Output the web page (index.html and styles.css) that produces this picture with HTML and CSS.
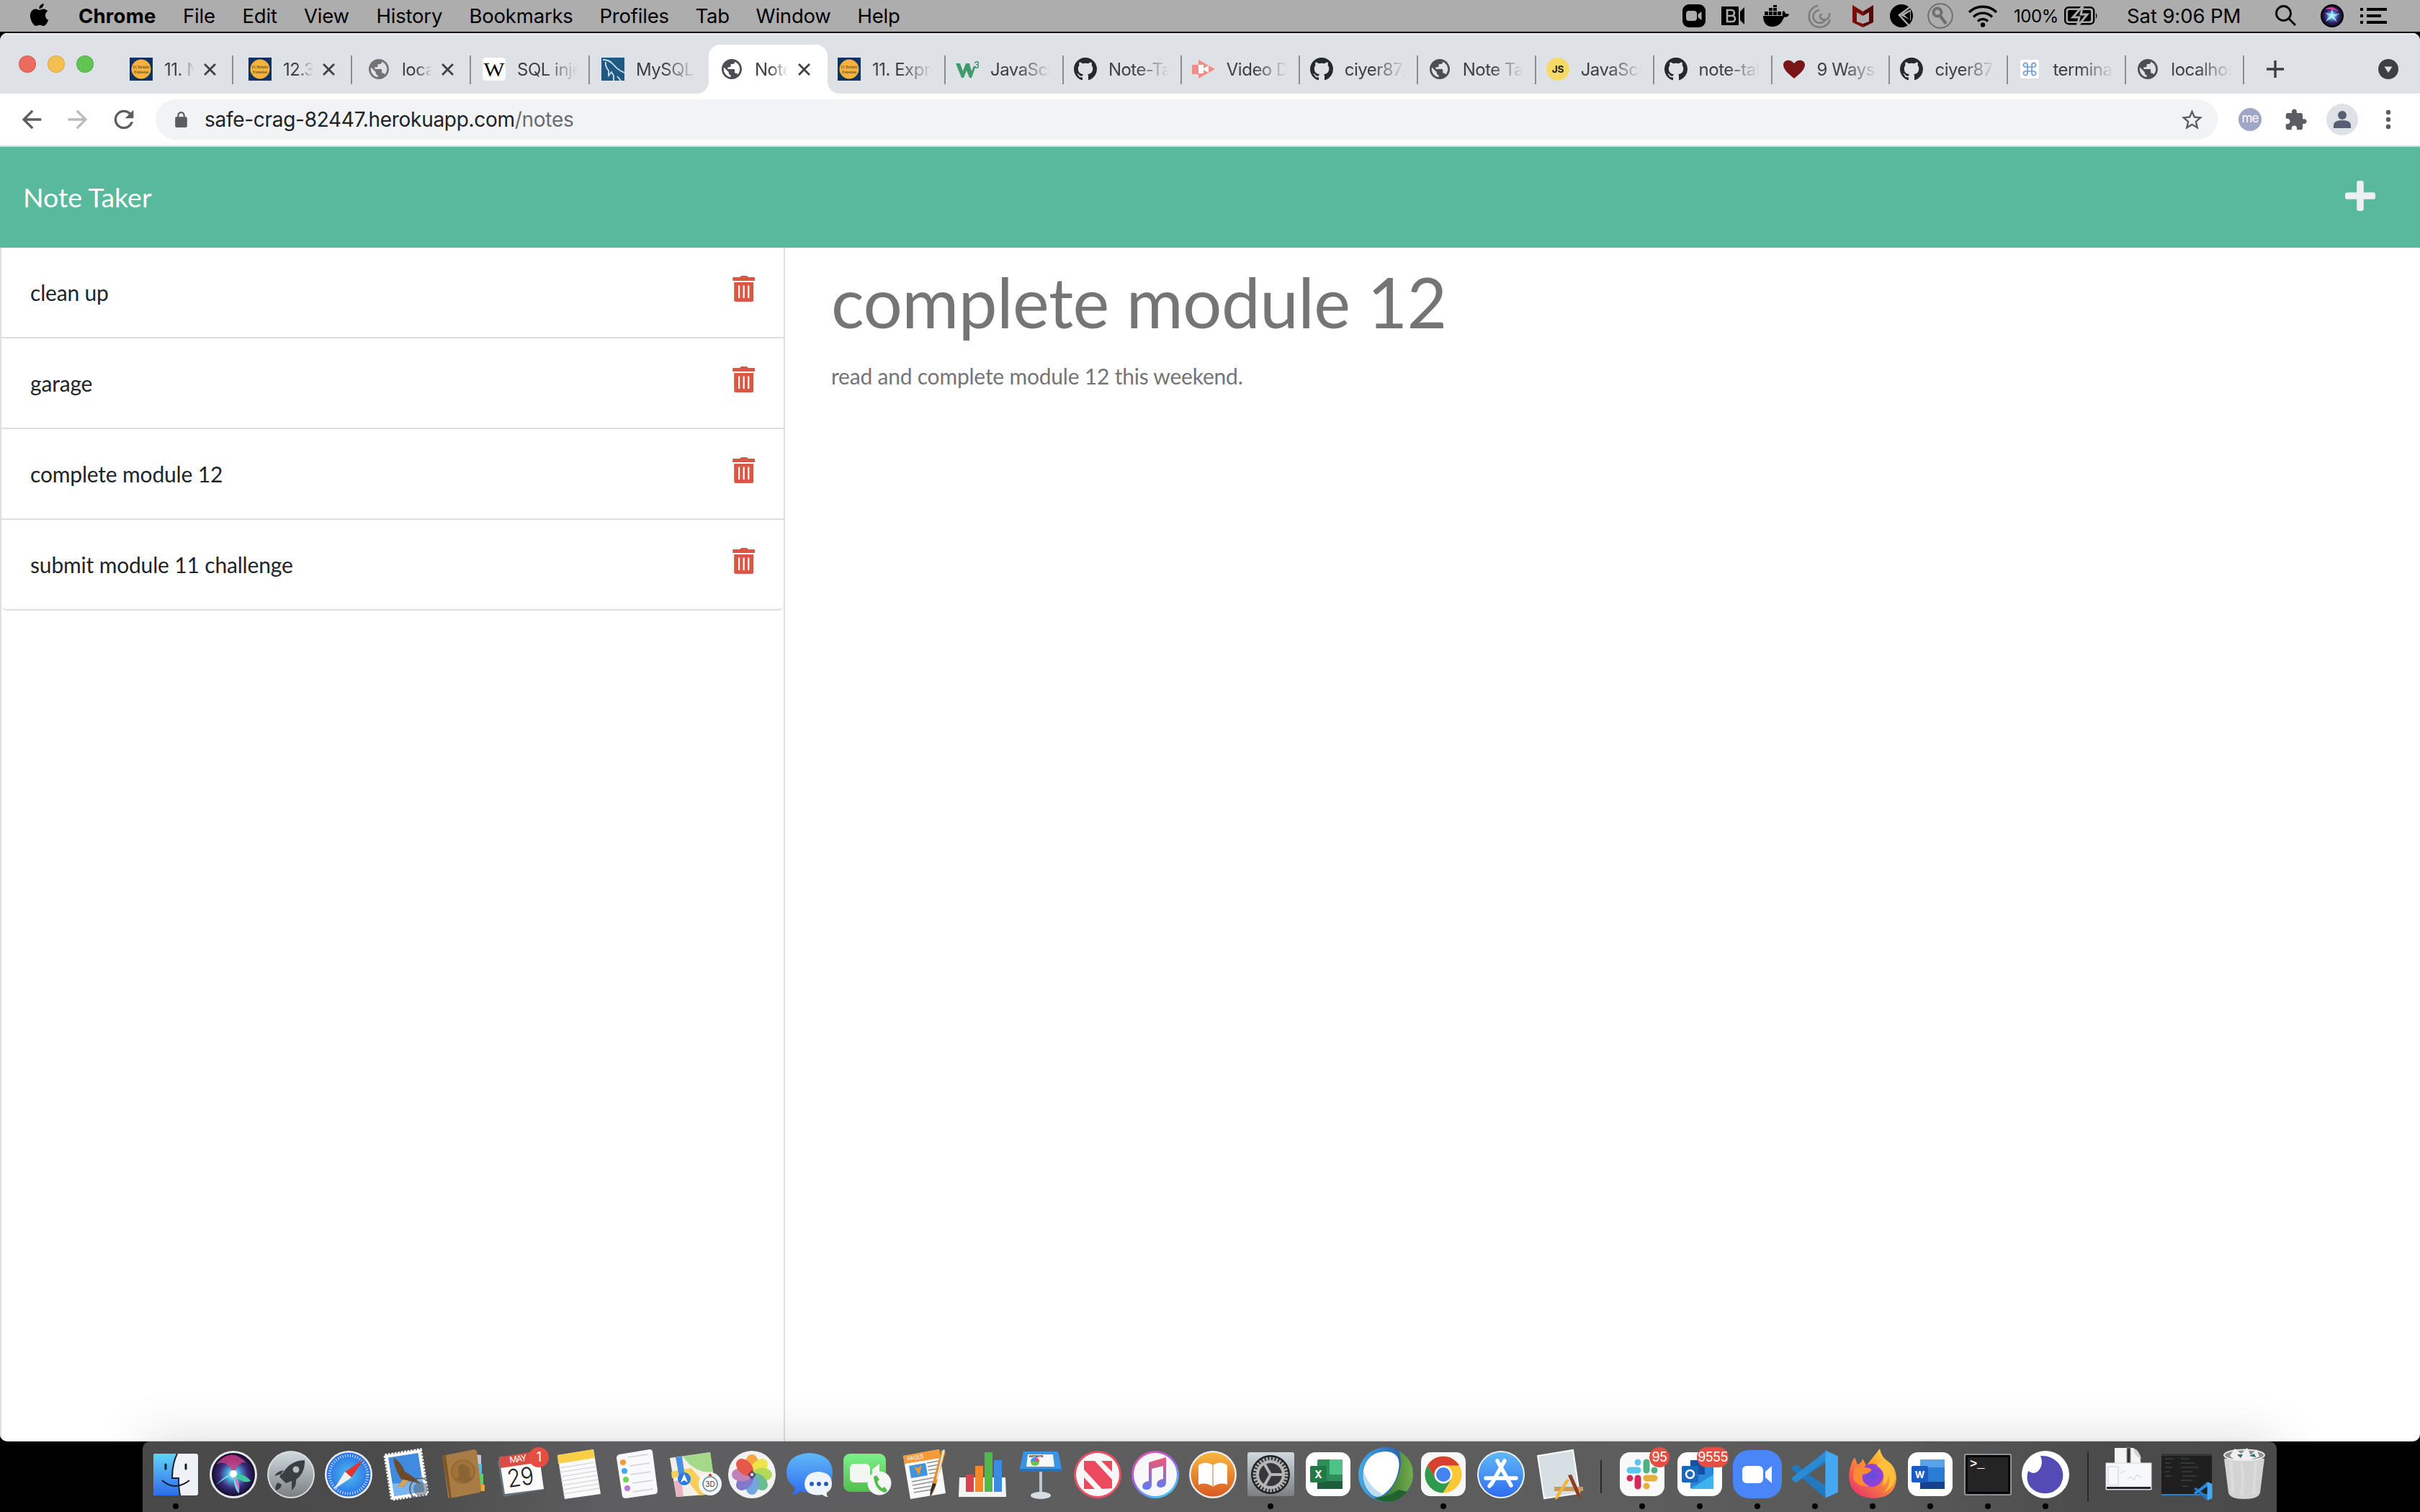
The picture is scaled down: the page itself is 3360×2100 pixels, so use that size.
FILE: index.html
```html
<!DOCTYPE html>
<html lang="en">
<head>
<meta charset="utf-8">
<title>Note Taker</title>
<link rel="stylesheet" href="styles.css">
</head>
<body>
<svg class="defs" aria-hidden="true">
  <defs>
    <symbol id="globe" viewBox="2 2 20 20"><path d="M12 2C6.48 2 2 6.48 2 12s4.48 10 10 10 10-4.48 10-10S17.52 2 12 2zm-1 17.93c-3.95-.49-7-3.85-7-7.93 0-.62.08-1.21.21-1.79L9 15v1c0 1.1.9 2 2 2v1.93zm6.9-2.54c-.26-.81-1-1.39-1.9-1.39h-1v-3c0-.55-.45-1-1-1H8v-2h2c.55 0 1-.45 1-1V7h2c1.1 0 2-.9 2-2v-.41c2.93 1.19 5 4.06 5 7.41 0 2.08-.8 3.97-2.1 5.39z"/></symbol>
    <symbol id="github" viewBox="0 0 16 16"><path fill="#24292e" d="M8 0C3.58 0 0 3.58 0 8c0 3.54 2.29 6.53 5.47 7.59.4.07.55-.17.55-.38 0-.19-.01-.82-.01-1.49-2.01.37-2.53-.49-2.69-.94-.09-.23-.48-.94-.82-1.13-.28-.15-.68-.52-.01-.53.63-.01 1.08.58 1.23.82.72 1.21 1.87.87 2.33.66.07-.52.28-.87.51-1.07-1.78-.2-3.64-.89-3.64-3.95 0-.87.31-1.59.82-2.15-.08-.2-.36-1.02.08-2.12 0 0 .67-.21 2.2.82.64-.18 1.32-.27 2-.27s1.36.09 2 .27c1.53-1.04 2.2-.82 2.2-.82.44 1.1.16 1.92.08 2.12.51.56.82 1.27.82 2.15 0 3.07-1.87 3.75-3.65 3.95.29.25.54.73.54 1.48 0 1.07-.01 1.93-.01 2.2 0 .21.15.46.55.38A8.01 8.01 0 0 0 16 8c0-4.42-3.58-8-8-8z"/></symbol>
    <symbol id="berkeley" viewBox="0 0 32 32"><rect width="32" height="32" fill="#0e3262"/><circle cx="16" cy="16" r="13.5" fill="#f6b23c"/><text x="16" y="15" font-family="Liberation Serif, serif" font-size="7" font-weight="bold" text-anchor="middle" textLength="23" lengthAdjust="spacingAndGlyphs" fill="#6b5a28">UC Berkeley</text><text x="16" y="22" font-family="Liberation Serif, serif" font-size="7" font-weight="bold" text-anchor="middle" textLength="20" lengthAdjust="spacingAndGlyphs" fill="#6b5a28">Extension</text></symbol>
    <symbol id="close" viewBox="0 0 16 16"><path d="M1 1l14 14M15 1l-14 14" stroke="#3c4043" stroke-width="2.6" fill="none"/></symbol>
    <symbol id="trash" viewBox="0 0 32 36"><path fill="#da5645" fill-rule="evenodd" d="M1.500 2H10l1.500-1.600q.4-.4 1-.4h7q.6 0 1 .4L22 2h8q1.200 0 1.200 1.200V7H.2V3.200Q.2 2 1.500 2zM2.200 9h27v24.500q0 2.500-2.500 2.500h-22q-2.500 0-2.500-2.500zM8 13.500v17.500h2.200V13.500zM14.600 13.500v17.500h2.200V13.500zM21.200 13.500v17.500h2.200V13.500z"/></symbol>
    <linearGradient id="gBlue" x2="0" y2="1"><stop stop-color="#5fb9f7"/><stop offset="1" stop-color="#2f6cf0"/></linearGradient>
    <linearGradient id="gFinder" x2="0" y2="1"><stop stop-color="#5fd3fb"/><stop offset="1" stop-color="#2f6bea"/></linearGradient>
    <linearGradient id="gSilver" x2="0" y2="1"><stop stop-color="#cfd9de"/><stop offset="1" stop-color="#7b7f82"/></linearGradient>
    <linearGradient id="gGreen" x2="0" y2="1"><stop stop-color="#7df08a"/><stop offset="1" stop-color="#4fc04a"/></linearGradient>
    <linearGradient id="gOrange" x2="0" y2="1"><stop stop-color="#f8b73e"/><stop offset="1" stop-color="#d95a22"/></linearGradient>
    <linearGradient id="gTunes" x2="0.600" y2="1"><stop stop-color="#f6508a"/><stop offset=".55" stop-color="#9a62f4"/><stop offset="1" stop-color="#45c4f5"/></linearGradient>
    <linearGradient id="gNote" x2="0" y2="1"><stop stop-color="#f5566f"/><stop offset="1" stop-color="#5b7cf7"/></linearGradient>
    <linearGradient id="gFox" x1="1" x2="0.200" y2="1"><stop stop-color="#fff04d"/><stop offset=".45" stop-color="#ff9a2e"/><stop offset="1" stop-color="#e8336b"/></linearGradient>
    <linearGradient id="gRing"><stop stop-color="#44a9e4"/><stop offset="1" stop-color="#1d4fa6"/></linearGradient>
    <linearGradient id="gLeaf"><stop stop-color="#23602f"/><stop offset="1" stop-color="#74ad4a"/></linearGradient>
    <radialGradient id="gSiri"><stop stop-color="#d8f8ff"/><stop offset=".3" stop-color="#4aa6d8"/><stop offset=".65" stop-color="#3a2a78"/><stop offset="1" stop-color="#130d2b"/></radialGradient>
    <radialGradient id="gSafari"><stop stop-color="#4dc0ee"/><stop offset="1" stop-color="#2a6ee6"/></radialGradient>
    <radialGradient id="gFoxCore"><stop stop-color="#5a4fe0"/><stop offset="1" stop-color="#9c3fd0"/></radialGradient>
    <symbol id="vscode" viewBox="0 0 60 60"><path fill="#2279bd" d="M42 1L17 26 6 18 1 21v3l41 35 2-14L22 30l22-15z"/><path fill="#2a8ad6" d="M1 37l5 4 38-29V1L1 34z"/><path fill="#45a8f2" d="M43 0l16 7v46l-16 7z"/></symbol>
  </defs>
</svg>

<header class="menubar">
  <nav class="menus">
    <svg class="apple" viewBox="0 0 24 24"><path d="M12.152 6.896c-.948 0-2.415-1.078-3.960-1.040-2.040.027-3.910 1.183-4.961 3.014-2.117 3.675-.546 9.103 1.519 12.090 1.013 1.454 2.208 3.090 3.792 3.039 1.520-.065 2.090-.987 3.935-.987 1.831 0 2.350.987 3.960.948 1.637-.026 2.676-1.480 3.676-2.948 1.156-1.688 1.636-3.325 1.662-3.415-.039-.013-3.182-1.221-3.220-4.857-.026-3.040 2.480-4.494 2.597-4.559-1.429-2.090-3.623-2.324-4.390-2.376-2-.156-3.675 1.090-4.610 1.090zM15.530 3.830c.843-1.012 1.400-2.427 1.245-3.830-1.207.052-2.662.805-3.532 1.818-.780.896-1.454 2.338-1.273 3.714 1.338.104 2.715-.688 3.559-1.701"/></svg>
    <b>Chrome</b><span>File</span><span>Edit</span><span>View</span><span>History</span><span>Bookmarks</span><span>Profiles</span><span>Tab</span><span>Window</span><span>Help</span>
  </nav>
  <div class="status">
    <svg width="32" height="32" viewBox="0 0 32 32"><rect width="32" height="32" rx="9"/><rect x="5" y="9" width="15" height="14" rx="4" fill="#adadad"/><path d="M21.500 14l5-4v12l-5-4z" fill="#adadad"/></svg>
    <svg width="32" height="26" viewBox="0 0 32 26"><path d="M0 0h24v26H0zM26 7l6-6v24l-6-6z"/><path d="M8 5h6a4 4 0 010 8H8zm0 8h7a4 4 0 010 8H8z" fill="none" stroke="#adadad" stroke-width="2.600"/></svg>
    <svg width="36" height="30" viewBox="0 0 36 30"><path d="M0 15h27c-1-4 0-6 1-7 2 1 3 3 3 4 2 0 4 0 5 1-1 3-4 4-7 4-3 8-8 13-16 13C4 30 0 24 0 15zM2 9h5v5H2zM8 9h5v5H8zM14 9h5v5h-5zM20 9h5v5h-5zM8 4h5v4H8zM14 4h5v4h-5zM14 0h5v3h-5z"/></svg>
    <svg width="33" height="33" viewBox="0 0 33 33" fill="none" stroke="#7d7d7d" stroke-width="2.600"><path d="M14 2A15 15 0 1031 21M16 8a9 9 0 109 12M30 12v3a7 7 0 01-13 3 3 3 0 013-4"/></svg>
    <svg width="29" height="32" viewBox="0 0 29 32"><path fill="#7d0a0a" d="M0 1l14.500 9v6L6 11v13l8.500 3v5L0 25z"/><path fill="#540808" d="M29 1l-14.500 9v6L23 11v13l-8.500 3v5L29 25z"/></svg>
    <svg width="32" height="32" viewBox="0 0 32 32"><circle cx="16" cy="16" r="16"/><path d="M29 3L13 15l13 14" fill="none" stroke="#adadad" stroke-width="2.500"/><path d="M14 15l15-8v15z" fill="#adadad"/><path d="M20 15l8-5v12z"/></svg>
    <svg width="36" height="36" viewBox="0 0 36 36" fill="none" stroke="#6f6f6f"><circle cx="18" cy="18" r="16.800" stroke-width="2"/><circle cx="14" cy="13" r="5.500" stroke-width="4"/><path d="M17 17l9 12" stroke-width="4.500"/></svg>
    <svg width="42" height="32" viewBox="0 0 42 32"><path d="M2 11a27 27 0 0138 0M8 17.500a18.500 18.500 0 0126 0M14 23.500a10 10 0 0114 0" fill="none" stroke="#000" stroke-width="3.400"/><circle cx="21" cy="28.500" r="3.200"/></svg>
    <span class="pct">100%</span>
    <svg width="47" height="26" viewBox="0 0 47 26"><rect x="1.200" y="1.200" width="40" height="23" rx="5" fill="none" stroke="#000" stroke-width="2.400"/><rect x="5" y="5" width="32" height="15.500" rx="2"/><path d="M26-1L12 15h9l-3 13 14-17h-9z" stroke="#adadad" stroke-width="3"/><path d="M44 9q3 4 0 8z"/></svg>
    <span class="clock">Sat 9:06 PM</span>
    <svg width="30" height="30" viewBox="0 0 30 30" fill="none" stroke="#000" stroke-width="2.800"><circle cx="11.500" cy="11.500" r="10"/><path d="M18.500 18.500L28 28"/></svg>
    <svg width="32" height="32" viewBox="0 0 32 32"><circle cx="16" cy="16" r="16"/><circle cx="16" cy="16" r="14" fill="url(#gSiri)"/><path d="M16 6l2 8 9-1-8 4 4 8-7-6-9 5 5-8-6-4 8 1z" fill="#bdeef2" opacity=".8"/><path d="M6 7q10-7 19 3-8-4-19-3z" fill="#d9429b"/></svg>
    <svg width="37" height="22" viewBox="0 0 37 22"><path d="M0 0h4v4H0zM0 9h4v4H0zM0 18h4v4H0zM9 0h28v4H9zM9 9h20v4H9zM9 18h28v4H9z"/></svg>
  </div>
</header>

<main class="window">
  <div class="tabstrip">
    <div class="lights"><i class="red"></i><i class="yellow"></i><i class="green"></i></div>
    <div class="tab wide"><svg class="fav"><use href="#berkeley"/></svg><span>11. Node</span><svg class="x"><use href="#close"/></svg></div>
    <div class="tab wide"><svg class="fav"><use href="#berkeley"/></svg><span>12.3.4</span><svg class="x"><use href="#close"/></svg></div>
    <div class="tab wide"><svg class="fav globe dim"><use href="#globe"/></svg><span>localhost</span><svg class="x"><use href="#close"/></svg></div>
    <div class="tab first"><svg class="fav" viewBox="0 0 32 32"><rect width="32" height="32" rx="5" fill="#fff"/><text x="16" y="25.500" font-family="Liberation Serif, serif" font-size="27" text-anchor="middle" textLength="29" lengthAdjust="spacingAndGlyphs">W</text></svg><span>SQL injection</span></div>
    <div class="tab first nosep"><svg class="fav" viewBox="0 0 32 32"><rect width="32" height="32" fill="#1e5a84"/><path d="M2 3q9 0 14 6t10 9l6 3M6 6q-1 6 4 12v7l4-5 3 5v7M22 26l5 6" fill="none" stroke="#cfe0ec" stroke-width="1.800"/></svg><span>MySQL ::</span></div>
    <div class="tab wide active"><svg class="fav globe"><use href="#globe"/></svg><span>Note Taker</span><svg class="x"><use href="#close"/></svg></div>
    <div class="tab"><svg class="fav"><use href="#berkeley"/></svg><span>11. Express</span></div>
    <div class="tab"><svg class="fav" viewBox="0 0 32 32"><path d="M0 8h6l4 11 4-11h5l3 11 3-8 2 3-5 14h-3l-4-10-4 10H8z" fill="#3f9b6e"/><text x="25" y="15" font-family="Inter, sans-serif" font-weight="bold" font-size="13" fill="#3f9b6e">3</text></svg><span>JavaScript</span></div>
    <div class="tab"><svg class="fav"><use href="#github"/></svg><span>Note-Taker</span></div>
    <div class="tab"><svg class="fav" viewBox="0 0 32 32"><path d="M0 10h9V3l23 13L9 29v-6H0z" fill="#f38b86"/><path d="M9 10h7v5l7-4v10l-7-4v5H9z" fill="#fff"/></svg><span>Video Demo</span></div>
    <div class="tab"><svg class="fav"><use href="#github"/></svg><span>ciyer87/note</span></div>
    <div class="tab"><svg class="fav globe"><use href="#globe"/></svg><span>Note Taker</span></div>
    <div class="tab"><svg class="fav" viewBox="0 0 32 32"><circle cx="16" cy="16" r="16" fill="#f7da66"/><text x="16" y="21" font-family="Inter, sans-serif" font-weight="bold" font-size="13.500" text-anchor="middle" fill="#222">JS</text></svg><span>JavaScript</span></div>
    <div class="tab"><svg class="fav"><use href="#github"/></svg><span>note-taker</span></div>
    <div class="tab"><svg class="fav" viewBox="0 0 32 32"><path d="M16 29C9 23 1 17 1 10c0-7 10-9 15-2 5-7 15-5 15 2 0 7-8 13-15 19z" fill="#7a1517"/></svg><span>9 Ways to</span></div>
    <div class="tab"><svg class="fav"><use href="#github"/></svg><span>ciyer87/note</span></div>
    <div class="tab"><svg class="fav" viewBox="0 0 32 32"><rect x="3" y="3" width="26" height="26" rx="3" fill="#fff"/><path d="M13 19v-6h6v6zM13 13v-2.500A2.800 2.800 0 1010.500 13zM19 13v-2.500A2.800 2.800 0 1121.500 13zM13 19v2.500A2.800 2.800 0 1110.500 19zM19 19v2.500a2.800 2.800 0 102.500-2.500z" fill="none" stroke="#6a9bd8" stroke-width="1.700"/></svg><span>terminal</span></div>
    <div class="tab"><svg class="fav globe"><use href="#globe"/></svg><span>localhost:3</span></div>
    <svg class="newtab" viewBox="0 0 24 24"><path d="M12 0v24M0 12h24" stroke="#3c4043" stroke-width="3.400"/></svg>
    <svg class="more" viewBox="0 0 28 28"><circle cx="14" cy="14" r="14" fill="#3c4043"/><path d="M8.500 10.500h11L14 19z" fill="#dee1e6"/></svg>
  </div>

  <div class="toolbar">
    <svg class="nav" viewBox="0 0 24 24"><path d="M20 11H7.830l5.590-5.590L12 4l-8 8 8 8 1.410-1.410L7.830 13H20v-2z"/></svg>
    <svg class="nav off" viewBox="0 0 24 24"><path d="M4 13h12.170l-5.590 5.590L12 20l8-8-8-8-1.410 1.410L16.170 11H4v2z"/></svg>
    <svg class="nav" viewBox="0 0 24 24"><path d="M17.650 6.350C16.200 4.900 14.210 4 12 4c-4.420 0-7.990 3.580-7.990 8s3.570 8 7.990 8c3.730 0 6.840-2.550 7.730-6h-2.080c-.82 2.330-3.040 4-5.650 4-3.310 0-6-2.690-6-6s2.690-6 6-6c1.660 0 3.140.69 4.220 1.780L13 11h7V4l-2.350 2.350z"/></svg>
    <div class="omnibox">
      <svg class="lock" viewBox="0 0 24 24"><path d="M18 8h-1V6c0-2.760-2.240-5-5-5S7 3.240 7 6v2H6c-1.100 0-2 .9-2 2v10c0 1.100.9 2 2 2h12c1.100 0 2-.9 2-2V10c0-1.100-.9-2-2-2zM9 6c0-1.660 1.340-3 3-3s3 1.340 3 3v2H9V6z"/></svg>
      <span class="url">safe-crag-82447.herokuapp.com<em>/notes</em></span>
      <svg class="star" viewBox="0 0 24 24"><path d="M22 9.240l-7.190-.62L12 2 9.190 8.630 2 9.240l5.460 4.730L5.820 21 12 17.270 18.180 21l-1.630-7.030L22 9.240zM12 15.400l-3.760 2.270 1-4.280-3.320-2.880 4.380-.38L12 6.100l1.710 4.040 4.380.38-3.320 2.880 1 4.280L12 15.400z"/></svg>
    </div>
    <div class="me">me</div>
    <svg class="puzzle" viewBox="0 0 24 24"><path d="M20.500 11H19V7c0-1.100-.9-2-2-2h-4V3.500C13 2.120 11.880 1 10.500 1S8 2.120 8 3.500V5H4c-1.100 0-1.990.9-1.990 2v3.800H3.500c1.490 0 2.700 1.210 2.700 2.700s-1.210 2.700-2.700 2.700H2V20c0 1.100.9 2 2 2h3.800v-1.500c0-1.490 1.210-2.700 2.700-2.700 1.490 0 2.700 1.210 2.700 2.700V22H17c1.100 0 2-.9 2-2v-4h1.500c1.380 0 2.500-1.120 2.500-2.500S21.880 11 20.500 11z"/></svg>
    <svg class="avatar" viewBox="0 0 44 44"><circle cx="22" cy="22" r="22" fill="#dee1e6"/><circle cx="22" cy="16" r="6" fill="#575f73"/><path d="M10 34v-4q0-7 12-7t12 7v4z" fill="#575f73"/></svg>
    <svg class="dots" viewBox="0 0 8 28"><circle cx="4" cy="4" r="3.200"/><circle cx="4" cy="14" r="3.200"/><circle cx="4" cy="24" r="3.200"/></svg>
  </div>

  <div class="navbar">
    <span>Note Taker</span>
    <svg viewBox="0 0 42 42"><path d="M19 0h4q2.800 0 2.800 2.800v13.400h13.400q2.800 0 2.800 2.800v4q0 2.800-2.800 2.800H25.800v13.400q0 2.800-2.800 2.800h-4q-2.800 0-2.800-2.800V25.800H2.800Q0 25.800 0 23v-4q0-2.800 2.800-2.800h13.400V2.800Q16.200 0 19 0z" fill="#ecf0f1"/></svg>
  </div>

  <div class="page">
    <ul class="notes">
      <li><span>clean up</span><svg><use href="#trash"/></svg></li>
      <li><span>garage</span><svg><use href="#trash"/></svg></li>
      <li><span>complete module 12</span><svg><use href="#trash"/></svg></li>
      <li><span>submit module 11 challenge</span><svg><use href="#trash"/></svg></li>
    </ul>
    <section class="note">
      <h1>complete module 12</h1>
      <p>read and complete module 12 this weekend.</p>
    </section>
  </div>
</main>

<footer class="dockarea">
  <div class="dock">
    <div class="app on"><svg viewBox="0 0 80 98"><rect x="9" y="17" width="62" height="58" rx="3" fill="#eef2f7"/><path d="M12 17h30q-7 14-7 34h9q0 14 2 24H12q-3 0-3-3V20q0-3 3-3z" fill="url(#gFinder)"/><path d="M42 17q-7 14-7 34h9q0 14 2 24M21 54q18 16 38 0" fill="none" stroke="#14202c" stroke-width="2"/><path d="M26 32v6M54 32v6" stroke="#14202c" stroke-width="3" stroke-linecap="round"/></svg></div>
    <div class="app"><svg viewBox="0 0 80 98"><circle cx="40" cy="46" r="33" fill="#e8e8ea"/><circle cx="40" cy="46" r="30" fill="url(#gSiri)"/><path d="M16 32Q38 4 62 34q-10-14-22 11Q32 24 16 32z" fill="#cf3b80" opacity=".8"/><path d="M16 60q16-16 24-15 10 10 8 27-7-4-8-26-10 4-24 14z" fill="#63e0ea"/><path d="M40 45q18 0 24 10-12 5-24-10z" fill="#3fc79e"/><path d="M40 45l8 27-1-14z" fill="#f067b8"/><circle cx="40" cy="45" r="5" fill="#fff"/></svg></div>
    <div class="app"><svg viewBox="0 0 80 98"><circle cx="40" cy="46" r="33" fill="#d9dee1"/><circle cx="40" cy="46" r="31" fill="url(#gSilver)"/><path d="M59 26q-20 0-31 19l-11 3q4-7 13-8l-6 9 9 9 8-3v13q7-6 6-15Q60 44 59 26zM22 57q-5 5-3 11 7-2 8-8z" fill="#3b3f43"/><circle cx="47" cy="39" r="4.500" fill="#b6bec2"/></svg></div>
    <div class="app"><svg viewBox="0 0 80 98"><circle cx="40" cy="46" r="33" fill="#eceef0"/><circle cx="40" cy="46" r="30.500" fill="url(#gSafari)"/><circle cx="40" cy="46" r="26.500" fill="none" stroke="#d6ecff" stroke-width="4" stroke-dasharray="1 2.500"/><path d="M61 25L35 42l9 8z" fill="#e2342f"/><path d="M19 67l16-25 9 8z" fill="#f0f0f0"/></svg></div>
    <div class="app"><svg viewBox="0 0 80 98"><g transform="rotate(-9 40 46)"><rect x="15" y="15" width="50" height="62" fill="none" stroke="#fff" stroke-width="4" stroke-dasharray="3 1.500"/><rect x="15" y="15" width="50" height="62" fill="#fff"/><rect x="19" y="19" width="42" height="54" fill="#3f8be0"/><path d="M19 55q22 5 42-4v22H19z" fill="#7ab6ee"/><path d="M26 20q10 8 13 22 11 8 19 20l-16-7-8 7-8-1 7-8q-8-16-7-33z" fill="#6b4a2d"/><path d="M34 52l8 3-8 7-8-1z" fill="#d9a35c"/></g><circle cx="60" cy="66" r="15" fill="none" stroke="#4b535f" stroke-width="2" opacity=".8"/><circle cx="60" cy="66" r="10" fill="#47525f" opacity=".5"/></svg></div>
    <div class="app"><svg viewBox="0 0 80 98"><path d="M56 18l8 1v12h-6z" fill="#c3cbd1"/><path d="M58 31h7v14h-5z" fill="#5cb9e6"/><path d="M59 45h8v15h-6z" fill="#63cf63"/><path d="M60 60h9v9h-9z" fill="#f0a531"/><path d="M10 20l44-9q3 0 4 3l6 53q0 3-3 4l-40 8q-3 0-3-3z" fill="#a97c45"/><path d="M10 20l5-1 8 60h-3z" fill="#7d5629"/><circle cx="39" cy="42" r="16" fill="#a17339" stroke="#8c6433" stroke-width="1.500"/><path d="M28 52q7-3 5-8-3-8 3-12 6-2 8 3 6 1 4 9-1 5 5 8-10 9-25 0z" fill="#8b6433"/></svg></div>
    <div class="app"><svg viewBox="0 0 80 98"><path d="M7 27l8 50 56-10-8-44z" fill="#63737b"/><path d="M9 22l55-7 7 51-54 7z" fill="#fbfbfb"/><path d="M9 22l53-9 3 16-54 8z" fill="#d94d45"/><text transform="translate(24 30) rotate(-8)" font-family="Inter, sans-serif" font-size="12" fill="#fff" textLength="24">MAY</text><text transform="translate(22 64) rotate(-8)" font-family="Inter, sans-serif" font-size="34" font-weight="300" fill="#222" textLength="37" lengthAdjust="spacingAndGlyphs">29</text></svg><span class="badge one">1</span></div>
    <div class="app"><svg viewBox="0 0 80 98"><path d="M10 19l50-8 10 62-50 7z" fill="#fafafa"/><path d="M10 19l50-8 1 12-50 8z" fill="#f8cf45"/><path d="M12 37l50-8M13 43l50-8M14 49l50-8M15 55l50-8M16 61l50-8M17 67l50-8M18 73l50-8" stroke="#c9cdd2" stroke-width="1"/></svg></div>
    <div class="app"><svg viewBox="0 0 80 98"><path d="M16 18l42-7q3 0 4 3l7 54q0 4-3 5l-41 6q-4 0-5-3l-8-53q0-4 4-5z" fill="#f9f9fb"/><circle cx="21" cy="29" r="4" fill="#f39a35"/><circle cx="23" cy="41" r="4" fill="#3fa9f5"/><circle cx="25" cy="53" r="4" fill="#6ed84c"/><circle cx="27" cy="65" r="4" fill="#bb75dd"/><path d="M28 22l28-4M30 34l28-4M32 46l28-4M34 58l28-4M35 70l28-4" stroke="#cfd2d6" stroke-width="1.300"/></svg></div>
    <div class="app"><svg viewBox="0 0 80 98"><path d="M6 23l56-8 8 58-55 4z" fill="#f2f0e8"/><path d="M24 21l38-6 4 27q-24 4-42-21z" fill="#a5d98a"/><path d="M8 42l28-5 20 24-1 13-8 1-22-27-16 3z" fill="#f6cf5b"/><path d="M14 22l9-1 5 34h-8z" fill="#4a90e2"/><path d="M12 55l10-2 3 23-10 1z" fill="#eab3c2"/><circle cx="26" cy="52" r="9" fill="#2a7be0"/><path d="M26 45l5 12-5-3-5 3z" fill="#fff"/><circle cx="62" cy="59" r="16" fill="#f4f6f8"/><circle cx="62" cy="59" r="10" fill="#fff" stroke="#5c8797" stroke-width="1.500"/><text x="62" y="63" font-family="Inter, sans-serif" font-size="10" text-anchor="middle" fill="#333">3D</text><path d="M62 44l3 4h-6z" fill="#d33"/></svg></div>
    <div class="app"><svg viewBox="0 0 80 98"><circle cx="40" cy="46" r="33" fill="#f2f2f2"/><g opacity=".92"><ellipse cx="40" cy="32" rx="9.500" ry="14" fill="#f7a035"/><ellipse cx="40" cy="32" rx="9.500" ry="14" fill="#efe23c" transform="rotate(45 40 46)"/><ellipse cx="40" cy="32" rx="9.500" ry="14" fill="#b2d74a" transform="rotate(90 40 46)"/><ellipse cx="40" cy="32" rx="9.500" ry="14" fill="#5fb98a" transform="rotate(135 40 46)"/><ellipse cx="40" cy="32" rx="9.500" ry="14" fill="#6a9fdc" transform="rotate(180 40 46)"/><ellipse cx="40" cy="32" rx="9.500" ry="14" fill="#7a6fc8" transform="rotate(225 40 46)"/><ellipse cx="40" cy="32" rx="9.500" ry="14" fill="#bf78b5" transform="rotate(270 40 46)"/><ellipse cx="40" cy="32" rx="9.500" ry="14" fill="#e44c3c" transform="rotate(315 40 46)"/></g><path d="M40 40l6 6-6 7-6-7z" fill="#43335c" opacity=".7"/><circle cx="40" cy="46" r="2" fill="#fff"/></svg></div>
    <div class="app"><svg viewBox="0 0 80 98"><path d="M40 16q32 2 32 28T40 71q-8 0-13-2-5 6-12 5 5-4 5-10Q8 56 8 44 8 18 40 16z" fill="url(#gBlue)"/><path d="M52 42q19 1 19 17 0 8-7 12-1 4 2 6-5 0-8-3-24 3-25-15 1-16 19-17z" fill="#eef5fd"/><circle cx="43" cy="59" r="3" fill="#2a5fae"/><circle cx="53" cy="59" r="3" fill="#2a5fae"/><circle cx="63" cy="59" r="3" fill="#2a5fae"/></svg></div>
    <div class="app"><svg viewBox="0 0 80 98"><rect x="7" y="17" width="59" height="53" rx="9" fill="url(#gGreen)"/><rect x="16" y="31" width="28" height="26" rx="6" fill="#f3f7f3"/><path d="M47 39l10-8v26l-10-8z" fill="#f3f7f3"/><circle cx="57" cy="58" r="16.500" fill="#f5f6f5"/><path d="M49 49l4-2 4 6-3 3q2 6 7 9l3-2 4 5-3 3q-14-3-16-22z" fill="#4fbf4a"/></svg></div>
    <div class="app"><svg viewBox="0 0 80 98"><path d="M10 20l50-9 9 61-49 8z" fill="#fafafa"/><path d="M10 20l50-9 2 12-50 8z" fill="#f49a37"/><text transform="translate(16 27) rotate(-9)" font-family="Inter, sans-serif" font-size="8" fill="#fff" textLength="23" lengthAdjust="spacingAndGlyphs">PAGES</text><path d="M18 34l23-4 3 17-23 4z" fill="#4193df"/><path d="M25 35l5 2 6-4-4 14z" fill="#f59a31"/><path d="M43 30l16-3M44 35l16-3M45 40l12-2M46 45l10-2M22 56l32-6M23 61l32-6M24 66l24-4M25 71l24-4" stroke="#8f8f8f" stroke-width="1.500"/><path d="M63 12l6 2-15 52-6 12 1-14z" fill="#e5912e"/><path d="M51 58l5 1-4 9-5 10 1-11z" fill="#333"/><path d="M65 12l3-1-10 42-2-1z" fill="#e6e6e6"/></svg></div>
    <div class="app"><svg viewBox="0 0 80 98"><path d="M8 50h64l1 27H7z" fill="#f4f4f4"/><rect x="17" y="46" width="11" height="24" fill="#d8434f"/><rect x="30" y="34" width="11" height="36" fill="#ef8a2c"/><rect x="43" y="15" width="11" height="55" fill="#52b84c"/><rect x="56" y="26" width="11" height="44" fill="#3a8ae8"/></svg></div>
    <div class="app"><svg viewBox="0 0 80 98"><path d="M39 38h4v38h-4z" fill="#bfc8d0"/><ellipse cx="41" cy="75" rx="14" ry="5" fill="#d5dde4"/><path d="M17 14h48l5 24H12z" fill="#3794e8"/><path d="M12 38h58v4H12z" fill="#2374bd"/><path d="M23 18h35l2 17H21z" fill="#f8f9fa"/><text x="25" y="22" font-family="Inter, sans-serif" font-size="4" font-weight="bold">KEYNOTE</text><circle cx="33" cy="28" r="6" fill="#68c24c"/><path d="M33 28v-6a6 6 0 016 6z" fill="#e44d90"/><path d="M33 28h-6a6 6 0 016-6z" fill="#3e9ae8"/></svg></div>
    <div class="app"><svg viewBox="0 0 80 98"><circle cx="40" cy="46" r="33" fill="#ea4e62"/><circle cx="40" cy="46" r="30" fill="#f7f7f8"/><path d="M21 27h15l24 26v12L46 66 21 39zM45 27h15v15zM21 50l15 16H21z" fill="#ec4a5f"/></svg></div>
    <div class="app"><svg viewBox="0 0 80 98"><circle cx="40" cy="46" r="33" fill="url(#gTunes)"/><circle cx="40" cy="46" r="30" fill="#f8f8fb"/><path d="M31 29l24-7v35q0 6-7 7-6 0-6-5 1-6 9-7V34l-16 4v23q-1 6-7 6-6 0-6-5 1-6 9-7z" fill="url(#gNote)"/></svg></div>
    <div class="app"><svg viewBox="0 0 80 98"><circle cx="40" cy="46" r="33" fill="#ececec"/><circle cx="40" cy="46" r="30.500" fill="url(#gOrange)"/><path d="M40 33q-10-7-20 0v27q10-4 20 3 10-7 20-3V33q-10-7-20 0z" fill="#fff"/><path d="M40 33v30" stroke="#d9a177" stroke-width="1.500"/></svg></div>
    <div class="app on"><svg viewBox="0 0 80 98"><rect x="8" y="15" width="65" height="61" rx="3" fill="url(#gSilver)"/><circle cx="40" cy="46" r="27" fill="#1f2022"/><circle cx="40" cy="46" r="22" fill="none" stroke="#a5a5a5" stroke-width="5" stroke-dasharray="3 1.600"/><circle cx="40" cy="46" r="18" fill="#36383b" stroke="#b5b5b5" stroke-width="4"/><path d="M40 46h18M40 46l-9-16M40 46l-9 16" stroke="#b5b5b5" stroke-width="4"/></svg></div>
    <div class="app"><svg viewBox="0 0 80 98"><rect x="9" y="15" width="62" height="61" rx="14" fill="#fff"/><rect x="25" y="25" width="35" height="41" rx="2" fill="#2f8f5b"/><path d="M42 25h18v21H42z" fill="#4fc285"/><path d="M25 55h35v11H25z" fill="#1f5d3b"/><rect x="15" y="34" width="23" height="23" rx="2" fill="#1f7a45"/><text x="26.500" y="51" font-family="Inter, sans-serif" font-size="14" font-weight="bold" fill="#fff" text-anchor="middle">X</text></svg></div>
    <div class="app"><svg viewBox="0 0 80 98"><circle cx="40" cy="46" r="38" fill="url(#gRing)"/><path d="M58 13q10 24-13 57-9 8-21 9 16 8 34 0Q78 66 78 46 78 24 58 13z" fill="url(#gLeaf)"/><path d="M24 79q20-2 34-12l12 3Q50 92 24 79z" fill="#20642d"/><path d="M9 40Q14 16 38 14q24 0 20 24-4 24-22 36-8 5-15 0Q8 62 9 40z" fill="#fff"/><path d="M9 40q6 22 27 34-8 5-15 0Q6 60 9 40z" fill="#bcdcf0"/></svg></div>
    <div class="app on"><svg viewBox="0 0 80 98"><rect x="9" y="15" width="62" height="61" rx="13" fill="#f7f7f7"/><circle cx="40" cy="46" r="25.500" fill="#fcc934"/><path d="M40 46L29.500 52.500 17.900 33.200A25.500 25.500 0 0162 33.500H40z" fill="#d7412f"/><path d="M40 46l11 6.500-11.500 19A25.500 25.500 0 0117.900 33.200l11.600 19.300z" fill="#2e9b4f"/><circle cx="40" cy="46" r="12.500" fill="#fff"/><circle cx="40" cy="46" r="10" fill="#4484f0"/></svg></div>
    <div class="app"><svg viewBox="0 0 80 98"><circle cx="40" cy="46" r="33" fill="#f1f2f4"/><circle cx="40" cy="46" r="31" fill="url(#gBlue)"/><path d="M45 27L27 59M35 27l19 34M19 51h42M24 62l2-3" fill="none" stroke="#fff" stroke-width="5.500" stroke-linecap="round"/></svg></div>
    <div class="app"><svg viewBox="0 0 80 98"><path d="M11 20l49-8 9 60-49 7z" fill="#d6dfe4" stroke="#fbfbfb" stroke-width="2"/><path d="M34 63h40v6H34z" fill="#c79a5d"/><path d="M51 52l4 2-16 25-4 2 1-5z" fill="#f1b53a"/><path d="M53 47l5-1 12 27 1 8-6-7z" fill="#8b3e22"/></svg></div>
    <div class="rule"></div>
    <div class="app on"><svg viewBox="0 0 80 98"><rect x="9" y="15" width="62" height="61" rx="14" fill="#f9f9f9"/><g stroke-width="9" stroke-linecap="round"><path d="M23 40h11M34 29v0" stroke="#5ec5ed"/><path d="M46 29v11M57 40v0" stroke="#4db282"/><path d="M57 51H46M46 62v0" stroke="#e3b13c"/><path d="M34 62V51M23 51v0" stroke="#d32b5c"/></g></svg><span class="badge b2">95</span></div>
    <div class="app on"><svg viewBox="0 0 80 98"><rect x="9" y="15" width="62" height="61" rx="14" fill="#fff"/><path d="M27 26h32v39H27z" fill="#2a88da"/><path d="M27 26h20v20H27z" fill="#1551a3"/><path d="M27 66l32-20v20z" fill="#3fb2ee"/><rect x="15" y="34" width="23" height="23" rx="2" fill="#1a67bd"/><circle cx="26.500" cy="45.500" r="5.500" fill="none" stroke="#fff" stroke-width="2.600"/></svg><span class="badge b4">9555</span></div>
    <div class="app on"><svg viewBox="0 0 80 98"><rect x="6" y="12" width="68" height="67" rx="22" fill="#4a86f7"/><rect x="19" y="34" width="29" height="24" rx="6" fill="#fff"/><path d="M51 42l9-8v24l-9-8z" fill="#fff"/></svg></div>
    <div class="app on"><svg viewBox="0 0 80 98"><use href="#vscode" x="7" y="12" width="66" height="67"/></svg></div>
    <div class="app on"><svg viewBox="0 0 80 98"><path d="M50 10q2 12 12 18 11 8 11 24-2 27-33 27Q8 77 7 48 8 32 15 22l4 10q6-2 7-8 4 6 5 10z" fill="url(#gFox)"/><circle cx="39" cy="47" r="16" fill="url(#gFoxCore)"/><path d="M15 37q14-4 24 2-4 6-13 7-2 12 10 16-18 2-23-12z" fill="#fb8b32"/><path d="M46 34q14 8 8 28 8-6 8-16 5 14-7 25 16-8 16-23-3-14-13-20-7-3-12 6z" fill="#ffc13d"/></svg></div>
    <div class="app on"><svg viewBox="0 0 80 98"><rect x="9" y="15" width="62" height="61" rx="14" fill="#fff"/><rect x="26" y="25" width="34" height="41" rx="2" fill="#2b7cd3"/><path d="M26 25h34v11H26z" fill="#58a3ea"/><path d="M26 56h34v10H26z" fill="#17408f"/><rect x="14" y="34" width="23" height="23" rx="2" fill="#1c5bbf"/><text x="25.500" y="50.500" font-family="Inter, sans-serif" font-size="13" font-weight="bold" fill="#fff" text-anchor="middle">W</text></svg></div>
    <div class="app on"><svg viewBox="0 0 80 98"><rect x="8" y="18" width="64" height="56" rx="2" fill="#050505" stroke="#aeb3b7" stroke-width="1.500"/><rect x="12" y="22" width="56" height="48" fill="#242424"/><text x="15" y="36" font-family="Liberation Mono, monospace" font-size="17" font-weight="bold" fill="#fff">&gt;_</text></svg></div>
    <div class="app on"><svg viewBox="0 0 80 98"><circle cx="40" cy="46" r="33" fill="#fff"/><path d="M33 20Q38 32 30 41q-6 6-14 0-6 20 12 29 20 7 32-8 10-18-3-33-10-10-24-9z" fill="#544bb6"/></svg></div>
    <div class="rule tall"></div>
    <div class="app"><svg viewBox="0 0 80 98"><path d="M20 9h26q9 6 11 24H20z" fill="#f3f3f3"/><path d="M46 9q0 10 11 16-2-12-11-16z" fill="#d5d5d5"/><path d="M37 9h5v22h-5z" fill="#333" stroke="#999"/><path d="M8 30h63v37H8z" fill="#f7f8fa" stroke="#d8d8d8"/><path d="M11 35h14v26H11zM28 44l6-3M38 52l5-3 4 5 4-8 6 4" fill="none" stroke="#c3cfdc"/><path d="M9 63h61v3H9z" fill="#1d2432"/></svg></div>
    <div class="app"><svg viewBox="0 0 80 98"><path d="M5 17h70v58H5z" fill="#1f1f20"/><path d="M5 17h70v3H5z" fill="#373737"/><path d="M5 73h70v2H5z" fill="#2a7fd0"/><path d="M10 24h12M10 30h8M10 36h10M10 42h7M10 48h9M32 24h12M32 30h20M32 36h24M34 42h14M34 48h20M32 54h16M34 62h8" stroke="#46524d" stroke-width="1.100"/><use href="#vscode" x="50" y="56" width="26" height="26"/></svg></div>
    <div class="app"><svg viewBox="0 0 80 98"><path d="M12 24h56l-6 47q-2 9-22 9t-22-9z" fill="#d3d3d4"/><path d="M22 28l2 44M56 28l-3 46M36 30q4 20 0 44" fill="none" stroke="#dcdcdc" stroke-width="4"/><ellipse cx="40" cy="19" rx="28" ry="7.500" fill="#8d8f90" stroke="#e8e8e8" stroke-width="2"/><path d="M20 20l7-10 9 7 8-8 5 10 8-8 4 10-14 5H27z" fill="#efefef"/><path d="M30 18l5 5 3-5M47 20l7-3 2 5z" fill="#2c6d6d"/></svg></div>
  </div>
</footer>
</body>
</html>
```
FILE: styles.css
```css
* { box-sizing: border-box; }

body {
  margin: 0;
  width: 3360px;
  height: 2100px;
  overflow: hidden;
  background: #000;
  display: flex;
  flex-direction: column;
  font-family: Inter, "Liberation Sans", sans-serif;
}

.defs { position: absolute; width: 0; height: 0; }
svg { flex: none; display: block; }

/* macOS menu bar */
.menubar {
  flex: none;
  height: 44px;
  margin-bottom: 2px;
  background: #adadad;
  display: flex;
  justify-content: space-between;
  font-size: 27.500px;
  color: #000;
}
.menus {
  display: grid;
  grid-template-columns: 70px 145px 82.500px 85.500px 100.500px 129px 181px 133px 84px 141px auto;
  padding-left: 39px;
  align-items: center;
  white-space: nowrap;
  letter-spacing: -.2px;
}
.menus b { letter-spacing: .2px; }
.apple { width: 31px; height: 31px; margin-top: -4px; }
.status {
  display: grid;
  grid-template-columns: 54px 58px 62px 62px 52px 52px 56px 64px 70px 87px 206px 63px 55px 83px;
  align-items: center;
  white-space: nowrap;
}
.pct { font-size: 24px; letter-spacing: -.4px; }
.clock { letter-spacing: -.1px; }

/* browser window */
.window {
  flex: none;
  height: 1956px;
  background: #fff;
  border-radius: 10px;
  overflow: hidden;
  display: flex;
  flex-direction: column;
}
.tabstrip {
  flex: none;
  height: 84px;
  padding-top: 14px;
  background: #dee1e6;
  border-top: 2px solid #eceef1;
  display: flex;
  align-items: center;
}
.lights {
  width: 159px;
  flex: none;
  padding: 0 0 14px 26px;
  display: flex;
  gap: 16px;
}
.lights i { width: 24px; height: 24px; border-radius: 50%; border: 1px solid rgba(0, 0, 0, .12); }
.red { background: #ed6a5e; }
.yellow { background: #f5bf4f; }
.green { background: #61c554; }

.tab {
  flex: none;
  width: 163.950px;
  height: 68px;
  display: flex;
  align-items: center;
  position: relative;
  padding-left: 14px;
  font-size: 24px;
  color: #3c4043;
}
.tab::after {
  content: "";
  position: absolute;
  right: 0;
  top: 15px;
  width: 2px;
  height: 40px;
  background: #8a8d92;
}
.tab.nosep::after { display: none; }
.fav { width: 32px; height: 32px; margin-right: 16px; }
.fav.globe { width: 28px; height: 28px; margin: 0 18px 0 2px; fill: #4b4e52; }
.fav.dim { fill: #737373; }
.tab span {
  width: 84px;
  overflow: hidden;
  white-space: nowrap;
  letter-spacing: -.5px;
  -webkit-mask-image: linear-gradient(90deg, #000 45%, transparent);
  mask-image: linear-gradient(90deg, #000 45%, transparent);
}
.tab.first { width: 165px; padding-left: 16px; }
.tab.wide { width: 165px; padding-left: 21px; }
.tab.wide span { width: 42px; margin-right: 13px; }
.x { width: 17px; height: 17px; }
.tab.active {
  background: #fff;
  border-radius: 16px 16px 0 0;
  padding-left: 16px;
}
.tab.active span { width: 46px; margin-right: 14px; }
.tab.active::before,
.tab.active::after {
  content: "";
  position: absolute;
  top: auto;
  bottom: 0;
  width: 16px;
  height: 16px;
  background: radial-gradient(circle at 0 0, transparent 15.500px, #fff 16px);
}
.tab.active::before { left: -16px; }
.tab.active::after { right: -16px; background: radial-gradient(circle at 100% 0, transparent 15.500px, #fff 16px); }
.newtab { width: 24px; height: 24px; margin-left: 31px; }
.more { width: 28px; height: 28px; margin-left: auto; margin-right: 30px; }

.toolbar {
  flex: none;
  height: 74px;
  border-bottom: 2px solid #d8dadc;
  display: flex;
  align-items: center;
  padding-left: 24px;
  fill: #5a5d61;
}
.nav { width: 40px; height: 40px; margin-right: 24px; }
.nav.off { fill: #b9babc; }
.omnibox {
  flex: none;
  width: 2863px;
  height: 56px;
  border-radius: 28px;
  background: #f1f3f4;
  display: flex;
  align-items: center;
  padding: 0 18px 0 23px;
}
.lock { width: 25px; height: 25px; margin-right: 20px; }
.url { flex: 1; font-size: 28px; letter-spacing: -.29px; color: #202124; }
.url em { font-style: normal; color: #686b6f; }
.star { width: 35px; height: 35px; }
.me {
  width: 32px;
  height: 32px;
  margin-left: 29px;
  border-radius: 50%;
  background: #9fa6c8;
  color: #fff;
  font-size: 17px;
  line-height: 29px;
  text-align: center;
  letter-spacing: -1px;
}
.puzzle { width: 33px; height: 33px; margin-left: 31px; }
.avatar { width: 44px; height: 44px; margin-left: 26px; }
.dots { width: 8px; height: 28px; margin-left: 38px; }

/* note taker app */
.navbar {
  flex: none;
  height: 140px;
  padding: 0 62px 2px 32px;
  background: #58b99d;
  display: flex;
  align-items: center;
  justify-content: space-between;
  font-family: Lato, sans-serif;
  font-size: 37.500px;
  color: #fff;
}
.navbar svg { width: 42px; height: 42px; margin-top: -2px; }
.page {
  flex: 1;
  display: flex;
  font-family: Lato, sans-serif;
  font-size: 30px;
  line-height: 45px;
}
.notes {
  flex: none;
  width: 1090px;
  margin: 0;
  padding: 0;
  list-style: none;
  border: solid #dfdfdf;
  border-width: 0 2px;
  letter-spacing: -.17px;
}
.notes li {
  height: 126px;
  padding: 0 39px 0 40px;
  border-bottom: 2px solid #dfdfdf;
  display: flex;
  align-items: center;
  justify-content: space-between;
  color: #212529;
}
.notes li:last-child { border-radius: 0 0 8px 8px; }
.notes svg { width: 32px; height: 36px; margin-top: -10px; }
.note { padding: 17px 64px; color: #757575; }
.note h1 { margin: 0; font-size: 96px; font-weight: 400; line-height: 115px; letter-spacing: -.55px; }
.note p { margin: 24px 0 0; letter-spacing: -.21px; }

/* dock */
.dockarea { flex: 1; padding-left: 198px; display: flex; }
.dock {
  position: relative;
  width: 2963px;
  height: 98px;
  padding-left: 6px;
  border-radius: 10px 10px 0 0;
  background: linear-gradient(90deg, #494949 0, #4b4b4b 12%, #5e5e60 22%, #5d5d5d 70%, #595959 82%, #4b4b4b 92%, #4a4a4a);
  box-shadow: 0 0 76px rgba(0, 0, 0, .15), 0 0 3px rgba(0, 0, 0, .25);
  display: flex;
}
.app { position: relative; flex: none; width: 80px; height: 98px; }
.app.on::after {
  content: "";
  position: absolute;
  left: 36px;
  top: 86px;
  width: 8px;
  height: 8px;
  border-radius: 50%;
  background: #000;
}
.rule { width: 2px; height: 46px; margin: 26px 16px 0 18px; background: #2b2b2b; }
.rule.tall { height: 70px; margin: 14px 16px 0 18px; }
.badge {
  position: absolute;
  top: 8px;
  height: 28px;
  border-radius: 14px;
  background: #e74e42;
  color: #fff;
  font-size: 18px;
  line-height: 28px;
  text-align: center;
  letter-spacing: -.6px;
}
.one { left: 50px; width: 28px; }
.b2 { left: 50px; width: 28px; }
.b4 { left: 36px; width: 44px; }
```
